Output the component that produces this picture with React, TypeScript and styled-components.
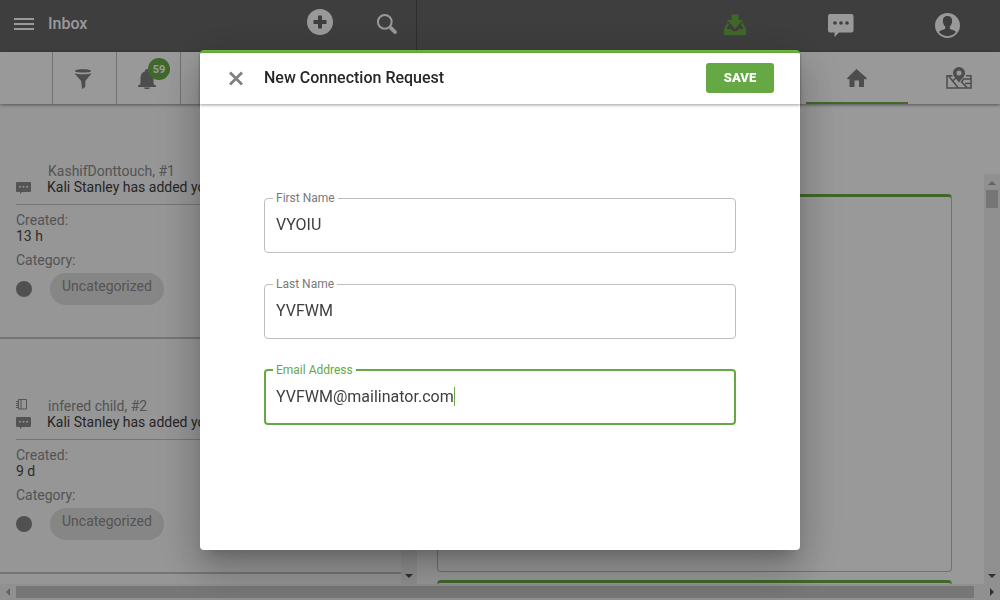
import React, { useState } from "react";
import styled, { createGlobalStyle, css } from "styled-components";

const GREEN = "#66a944";

const GlobalStyle = createGlobalStyle`
  *, *::before, *::after { box-sizing: border-box; }
  body {
    margin: 0;
    overflow: hidden;
    background: #fff;
    color: #4c4c4c;
    font: 14px/16px Roboto, "Liberation Sans", sans-serif;
  }
  button { font: inherit; border: 0; padding: 0; background: none; cursor: pointer; }
  svg { display: block; fill: currentColor; }
`;

const Page = styled.div`
  display: flex;
  flex-direction: column;
  height: 100vh;
`;

const TopBar = styled.header`
  display: flex;
  flex: none;
  height: 52px;
  background: #686868;
  color: #fff;
`;

const InboxBar = styled.div`
  display: flex;
  align-items: center;
  width: 417px;
  flex: none;
  padding: 0 18px 4px 14px;
  border-right: 1px solid #4c4c4c;
`;

const PageTitle = styled.h1`
  flex: 1;
  margin: 0 0 0 14px;
  font-size: 16px;
  font-weight: 500;
  line-height: 20px;
`;

const IconButton = styled.button`
  display: flex;
  align-items: center;
  justify-content: center;
  color: inherit;
`;

const InboxActions = styled.div`
  display: flex;
  align-items: center;
  gap: 43px;
  padding-bottom: 4px;
`;

const MainNav = styled.nav`
  display: flex;
  flex: 1;
  justify-content: flex-end;
`;

const NavLink = styled.a<{ $active?: boolean }>`
  display: flex;
  align-items: center;
  justify-content: center;
  width: 106px;
  padding-bottom: 2px;
  color: ${(p) => (p.$active ? "#6aad45" : "#fff")};
`;

const ToolBar = styled.div`
  position: relative;
  display: flex;
  flex: none;
  height: 52px;
  background: #fff;
  color: #808080;
  box-shadow: 0 1px 3px rgba(0, 0, 0, 0.45);
`;

const ToolGroup = styled.div`
  display: flex;
  padding-left: 52px;
`;

const Tool = styled.button`
  position: relative;
  display: flex;
  align-items: center;
  justify-content: center;
  width: 64px;
  padding: 2px 4px 0 0;
  border-left: 1px solid #bdbdbd;
  color: inherit;
  &:last-child { width: 1px; padding: 0; }
`;

const Badge = styled.span`
  position: absolute;
  top: 6px;
  left: 31px;
  width: 22px;
  height: 22px;
  border-radius: 11px;
  background: #6aad45;
  color: #fff;
  font-size: 11px;
  font-weight: 700;
  line-height: 23px;
  text-align: center;
`;

const Tabs = styled.nav`
  display: flex;
  flex: 1;
  justify-content: flex-end;
  margin-right: -10px;
`;

const Tab = styled.a<{ $active?: boolean }>`
  display: flex;
  align-items: center;
  justify-content: center;
  width: 102px;
  padding-top: 2px;
  color: inherit;
  border-bottom: 2px solid ${(p) => (p.$active ? "#6aad45" : "transparent")};
`;

const Content = styled.main`
  display: flex;
  flex: 1;
  min-height: 0;
`;

const ListPane = styled.section`
  display: flex;
  width: 417px;
  flex: none;
  background: #fafafa;
`;

const List = styled.ul`
  flex: 1;
  min-width: 0;
  margin: 0;
  padding: 0;
  overflow: hidden;
  list-style: none;
`;

const Item = styled.li`
  height: 235px;
  padding-top: 59px;
  border-bottom: 2px solid #c4c4c4;
  white-space: nowrap;
`;

const ItemHead = styled.div`
  display: grid;
  grid-template-columns: 31px 1fr;
  align-items: center;
  margin-left: 16px;
  padding-bottom: 9px;
  border-bottom: 1px solid #c4c4c4;
  color: #8c8c8c;
`;

const ItemName = styled.span`
  padding-left: 1px;
`;

const ItemMessage = styled.span`
  overflow: hidden;
  color: #404040;
`;

const Details = styled.dl`
  margin: 7px 0 0 16px;
`;

const Term = styled.dt`
  color: #8c8c8c;
`;

const Value = styled.dd`
  margin: 0 0 8px;
`;

const Category = styled.dd`
  display: flex;
  align-items: center;
  gap: 18px;
  margin: 5px 0 0;
`;

const Dot = styled.span`
  width: 16px;
  height: 16px;
  border-radius: 8px;
  background: #868686;
`;

const Chip = styled.span`
  height: 32px;
  padding: 0 12px;
  border-radius: 16px;
  background: #e0e0e0;
  color: #8c8c8c;
  line-height: 26px;
`;

const CardPane = styled.section`
  flex: 1;
  min-width: 0;
  padding: 90px 32px 0 20px;
  overflow: hidden;
`;

const Card = styled.article`
  height: 378px;
  margin-bottom: 8px;
  border: 1px solid #bdbdbd;
  border-top: 3px solid #6aad45;
  border-radius: 4px;
`;

const Track = styled.div<{ $offset?: number }>`
  display: flex;
  flex: none;
  flex-direction: column;
  align-items: center;
  width: 16px;
  margin-top: ${(p) => p.$offset ?? 0}px;
  padding: 7px 0 6px;
  background: #f1f1f1;
`;

const Thumb = styled.div`
  width: 12px;
  height: 18px;
  margin-top: 5px;
  background: #c4c4c4;
`;

const BottomTrack = styled.div`
  display: flex;
  flex: none;
  align-items: center;
  height: 16px;
  padding: 0 6px;
  background: #f1f1f1;
`;

const BottomThumb = styled.div`
  flex: 1;
  height: 12px;
  margin: 0 16px 0 6px;
  background: #c7c7c7;
`;

const Arrow = styled.i<{ $dir: "up" | "down" | "left" | "right"; $dim?: boolean }>`
  width: 0;
  height: 0;
  border: 4px solid transparent;
  ${(p) => {
    const color = p.$dim ? "#a3a3a3" : "#505050";
    if (p.$dir === "up") return css`border-top: 0; border-bottom-color: ${color};`;
    if (p.$dir === "down") return css`border-bottom: 0; margin-top: auto; border-top-color: ${color};`;
    if (p.$dir === "left") return css`border-left: 0; border-right-color: ${color};`;
    return css`border-right: 0; border-left-color: ${color};`;
  }}
`;

const Backdrop = styled.div`
  position: fixed;
  inset: 0;
  display: flex;
  align-items: center;
  justify-content: center;
  background: rgba(0, 0, 0, 0.4);
`;

const Dialog = styled.form`
  display: flex;
  flex-direction: column;
  width: 60%;
  min-width: 480px;
  min-height: 500px;
  border-top: 3px solid #6cb33f;
  border-radius: 4px;
  background: #fff;
  box-shadow: 0 11px 15px -7px rgba(0, 0, 0, 0.2), 0 24px 38px 3px rgba(0, 0, 0, 0.14),
    0 9px 46px 8px rgba(0, 0, 0, 0.12);
`;

const DialogHeader = styled.div`
  display: flex;
  align-items: center;
  height: 51px;
  padding: 0 26px 2px 28px;
  color: #808080;
  box-shadow: 0 1px 3px rgba(0, 0, 0, 0.4);
`;

const DialogTitle = styled.h2`
  flex: 1;
  margin: 0 0 0 20px;
  color: #262626;
  font-size: 16px;
  font-weight: 500;
  line-height: 20px;
`;

const SaveButton = styled.button`
  width: 68px;
  height: 30px;
  border-radius: 3px;
  background: ${GREEN};
  color: #fff;
  font-size: 13px;
  font-weight: 900;
`;

const Fields = styled.div`
  display: flex;
  flex-direction: column;
  gap: 31px;
  padding: 94px 64px 0;
`;

const Field = styled.div<{ $focused: boolean }>`
  position: relative;
  display: flex;
  align-items: center;
  height: 55px;
  padding: 0 11px 2px;
  border: 1px solid #bdbdbd;
  border-radius: 4px;
  ${(p) =>
    p.$focused &&
    css`
      height: 56px;
      margin-top: -1px;
      padding: 0 10px 1px;
      border: 2px solid ${GREEN};
    `}
`;

const FieldLabel = styled.label<{ $focused: boolean }>`
  position: absolute;
  top: -9px;
  left: ${(p) => (p.$focused ? 7 : 8)}px;
  padding: 0 3px;
  background: #fff;
  color: ${(p) => (p.$focused ? GREEN : "#7a7a7a")};
  font-size: 12px;
`;

const TextInput = styled.input<{ $focused: boolean }>`
  ${(p) => (p.$focused ? "field-sizing: content;" : "flex: 1;")}
  min-width: 0;
  padding: 0;
  border: 0;
  outline: 0;
  background: none;
  color: #404040;
  caret-color: transparent;
  font: 16px/20px Roboto, "Liberation Sans", sans-serif;
`;

const Caret = styled.span`
  width: 1px;
  height: 19px;
  background: ${GREEN};
`;

const MenuIcon = () => (
  <svg width="20" height="12" viewBox="0 0 20 12">
    <path d="M0 0h20v2H0zM0 5h20v2H0zM0 10h20v2H0z" />
  </svg>
);

const PlusIcon = () => (
  <svg width="26" height="26" viewBox="0 0 26 26">
    <path fillRule="evenodd" d="M13 0a13 13 0 1 1 0 26a13 13 0 0 1 0-26zM11 6.500v4.500H6.500v4H11v4.500h4V15h4.500v-4H15V6.500z" />
  </svg>
);

const SearchGlyph = styled.svg`
  && { fill: none; }
  stroke: currentColor;
`;

const SearchIcon = () => (
  <SearchGlyph width="22" height="24" viewBox="0 0 22 24">
    <circle cx="8.800" cy="11.800" r="6.900" strokeWidth="2" />
    <path d="M13.500 16.500l1.500 1.500" strokeWidth="2.200" />
    <path d="M15.300 18.300L19 22" strokeWidth="3.800" strokeLinecap="round" />
  </SearchGlyph>
);

const InboxIcon = () => (
  <svg width="22" height="22" viewBox="0 0 22 22">
    <path d="M7.500 0.500h7V6H19l-8 9L3 6h4.500z" />
    <path d="M3.500 8.500L5 10.200L2.700 15h4.600L8.700 17h4.600l1.400-2h4.600L17 10.200l1.500-1.700L22 15v5.500a.8.800 0 0 1-.8.800H.8a.8.800 0 0 1-.8-.8V15z" />
  </svg>
);

const ChatIcon = () => (
  <svg width="26" height="24" viewBox="0 0 26 24">
    <path fillRule="evenodd" d="M2 1h21.500a2 2 0 0 1 2 2v14.500a2 2 0 0 1-2 2H11L6.500 24V19.500H2a2 2 0 0 1-2-2V3a2 2 0 0 1 2-2zM7 8.200a1.800 1.800 0 1 0 0 3.600a1.800 1.800 0 0 0 0-3.600zM13 8.200a1.800 1.800 0 1 0 0 3.600a1.800 1.800 0 0 0 0-3.600zM19 8.200a1.800 1.800 0 1 0 0 3.600a1.800 1.800 0 0 0 0-3.600z" />
  </svg>
);

const UserIcon = () => (
  <svg width="26" height="26" viewBox="0 0 26 26">
    <path fillRule="evenodd" d="M13.500 1a12.500 12.500 0 1 1 0 25a12.500 12.500 0 0 1 0-25zM13.500 4c-3 0-4.600 2-4.600 4.800c0 2.300.8 4.500 2.300 5.800v2.100c-1.500 1-4.700 1.400-6.200 3.300a10.800 10.800 0 0 0 17 0c-1.500-1.900-4.700-2.300-6.200-3.300v-2.100c1.500-1.300 2.300-3.500 2.300-5.800c0-2.800-1.600-4.800-4.600-4.800z" />
  </svg>
);

const FilterIcon = () => (
  <svg width="18" height="20" viewBox="0 0 18 20">
    <path d="M1 2c0-1.200 3.500-1.800 8-1.800s8 .6 8 1.800s-3.500 1.500-8 1.500S1 3.200 1 2z" />
    <path d="M0.300 4.200c2.400.8 5.200 1 8.700 1s6.300-.2 8.700-1L11.300 12v6L8 20l-.8-8z" />
  </svg>
);

const BellIcon = () => (
  <svg width="18" height="20" viewBox="0 0 18 20">
    <path d="M9 0a2 2 0 0 1 2 2.300c3 .8 4.500 3.400 4.500 6.700v4.500c0 1.500.5 2.500 2.500 3V18H0v-1.500c2-.5 2.500-1.500 2.500-3V9C2.500 5.700 4 3.100 7 2.300A2 2 0 0 1 9 0zM5.800 18.500h6.400L11 20H7z" />
  </svg>
);

const HomeIcon = () => (
  <svg width="20" height="18" viewBox="0 0 20 18">
    <path d="M9.500 0L20 9.300l-.8.900H17V18h-5v-6.500H7.500V18h-5v-7.800H.5L0 9.300z" />
  </svg>
);

const MapIcon = () => (
  <svg width="26" height="22" viewBox="0 0 26 22">
    <path fillRule="evenodd" d="M13 0a6 6 0 0 1 6 6c0 3.300-3 5.500-6 9.500C10 11.500 7 9.300 7 6a6 6 0 0 1 6-6zM13 3.500a2.500 2.500 0 1 0 0 5a2.500 2.500 0 0 0 0-5z" />
    <path d="M6.500 8.700H1v12.300h24V8.700h-5M3 9.500l9 11M7 13.500l3-2.500M15 14.500l6 6M18 11.500l-2 3M18 12h7M19 16.500h6" fill="none" stroke="currentColor" strokeWidth="1.500" />
  </svg>
);

const CloseIcon = () => (
  <svg width="16" height="16" viewBox="0 0 16 16">
    <path d="M2 2.500l12 12M14 2.500l-12 12" stroke="currentColor" strokeWidth="2.800" />
  </svg>
);

const MessageIcon = () => (
  <svg width="15" height="13" viewBox="0 0 15 13">
    <path fillRule="evenodd" d="M1 1h13a1 1 0 0 1 1 1v8a1 1 0 0 1-1 1H6l-2 2v-2H1a1 1 0 0 1-1-1V2a1 1 0 0 1 1-1zM3 5v1.600h1.800V5zM6.600 5v1.600h1.800V5zM10.200 5v1.600H12V5z" />
  </svg>
);

const NotebookIcon = () => (
  <svg width="12" height="16" viewBox="0 0 12 16">
    <path d="M2.500 1.500h8v9.500h-8zM5 1.500v9.500M0 3.500h3M0 5.500h3M0 7.500h3M0 9.500h3" fill="none" stroke="currentColor" />
  </svg>
);

const items = [
  { id: 1, name: "KashifDonttouch, #1", age: "13 h", notebook: false },
  { id: 2, name: "infered child, #2", age: "9 d", notebook: true },
];

const fieldList = [
  { id: "firstName", label: "First Name", value: "VYOIU" },
  { id: "lastName", label: "Last Name", value: "YVFWM" },
  { id: "email", label: "Email Address", value: "YVFWM@mailinator.com" },
];

export default function App() {
  const [values, setValues] = useState(fieldList.map((f) => f.value));
  const [focused, setFocused] = useState("email");

  return (
    <>
      <GlobalStyle />
      <Page>
        <TopBar>
          <InboxBar>
            <IconButton aria-label="Menu"><MenuIcon /></IconButton>
            <PageTitle>Inbox</PageTitle>
            <InboxActions>
              <IconButton aria-label="Add"><PlusIcon /></IconButton>
              <IconButton aria-label="Search"><SearchIcon /></IconButton>
            </InboxActions>
          </InboxBar>
          <MainNav>
            <NavLink href="#inbox" aria-label="Inbox" $active><InboxIcon /></NavLink>
            <NavLink href="#messages" aria-label="Messages"><ChatIcon /></NavLink>
            <NavLink href="#account" aria-label="Account"><UserIcon /></NavLink>
          </MainNav>
        </TopBar>
        <ToolBar>
          <ToolGroup>
            <Tool aria-label="Filter"><FilterIcon /></Tool>
            <Tool aria-label="Notifications"><BellIcon /><Badge>59</Badge></Tool>
            <Tool aria-label="More" />
          </ToolGroup>
          <Tabs>
            <Tab href="#home" aria-label="Home" $active><HomeIcon /></Tab>
            <Tab href="#map" aria-label="Map"><MapIcon /></Tab>
          </Tabs>
        </ToolBar>
        <Content>
          <ListPane>
            <List>
              {items.map((item) => (
                <Item key={item.id}>
                  <ItemHead>
                    {item.notebook ? <NotebookIcon /> : <span />}
                    <ItemName>{item.name}</ItemName>
                    <MessageIcon />
                    <ItemMessage>Kali Stanley has added you</ItemMessage>
                  </ItemHead>
                  <Details>
                    <Term>Created:</Term>
                    <Value>{item.age}</Value>
                    <Term>Category:</Term>
                    <Category><Dot /><Chip>Uncategorized</Chip></Category>
                  </Details>
                </Item>
              ))}
            </List>
            <Track><Arrow $dir="down" /></Track>
          </ListPane>
          <CardPane>
            <Card />
            <Card />
          </CardPane>
          <Track $offset={70}>
            <Arrow $dir="up" $dim />
            <Thumb />
            <Arrow $dir="down" />
          </Track>
        </Content>
        <BottomTrack>
          <Arrow $dir="left" $dim />
          <BottomThumb />
          <Arrow $dir="right" />
        </BottomTrack>
      </Page>
      <Backdrop>
        <Dialog role="dialog" aria-labelledby="dialog-title" onSubmit={(e) => e.preventDefault()}>
          <DialogHeader>
            <IconButton type="button" aria-label="Close"><CloseIcon /></IconButton>
            <DialogTitle id="dialog-title">New Connection Request</DialogTitle>
            <SaveButton type="submit">SAVE</SaveButton>
          </DialogHeader>
          <Fields>
            {fieldList.map((field, i) => {
              const active = focused === field.id;
              return (
                <Field key={field.id} $focused={active}>
                  <FieldLabel htmlFor={field.id} $focused={active}>{field.label}</FieldLabel>
                  <TextInput
                    id={field.id}
                    $focused={active}
                    value={values[i]}
                    onFocus={() => setFocused(field.id)}
                    onChange={(e) => setValues(values.map((v, n) => (n === i ? e.target.value : v)))}
                  />
                  {active && <Caret />}
                </Field>
              );
            })}
          </Fields>
        </Dialog>
      </Backdrop>
    </>
  );
}
